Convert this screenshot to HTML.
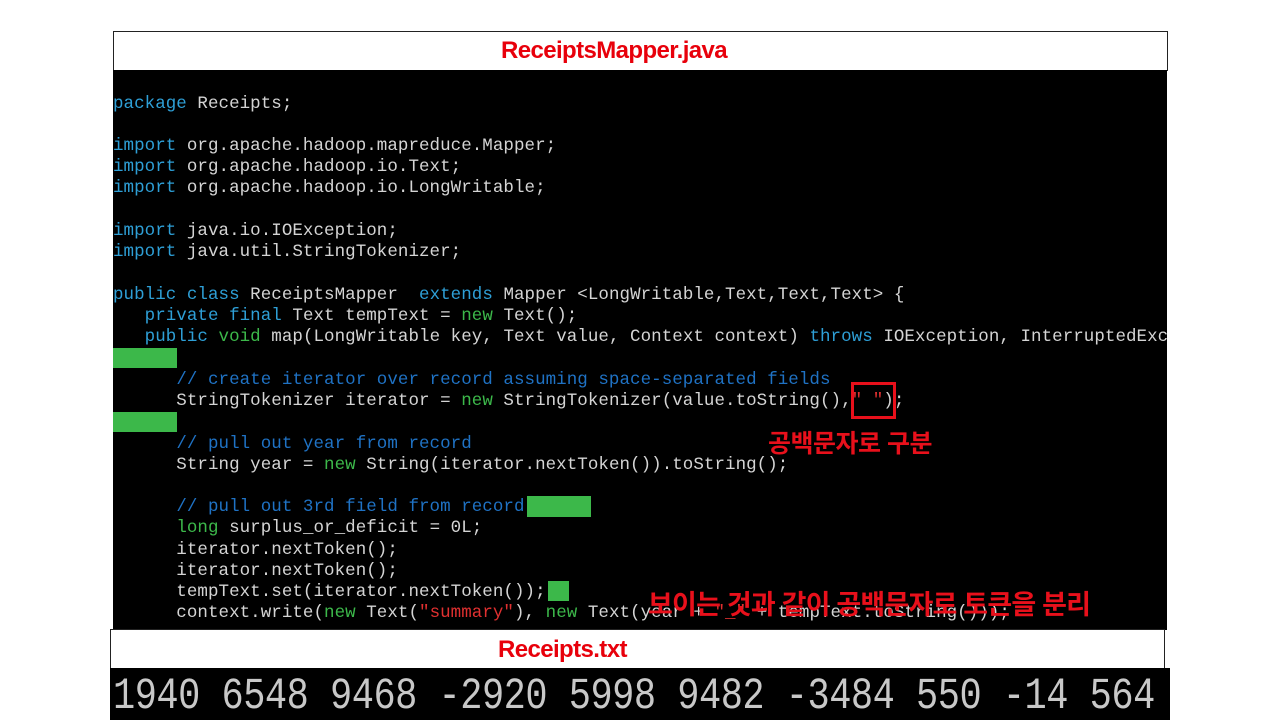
<!DOCTYPE html>
<html><head><meta charset="utf-8"><style>
html,body{margin:0;padding:0;background:#fff;width:1280px;height:720px;overflow:hidden;position:relative}
.code{position:absolute;left:113px;top:70px;width:1054px;height:560px;background:#000;overflow:hidden}
.l{position:absolute;left:0;white-space:pre;font-family:"Liberation Mono","DejaVu Sans Mono",monospace;font-size:17.5px;line-height:21px;color:#d4d4d4;letter-spacing:0.05px;margin-top:1px}
.k{color:#2e9fd6}.g{color:#3cb84a}.c{color:#1f72c4}.s{color:#e03030}
.gb{position:absolute;background:#3cb84a}
.box{position:absolute;background:#fff;border:1px solid #222;box-sizing:border-box;font-family:"Liberation Sans Narrow","Liberation Sans",sans-serif;font-weight:bold;color:#e8000b;font-size:24px;letter-spacing:-0.6px;white-space:nowrap}
.ann{position:absolute;font-family:"Liberation Sans","Noto Sans CJK KR",sans-serif;font-weight:bold;color:#e8101b;white-space:nowrap;letter-spacing:-0.5px}
.nums{position:absolute;left:110px;top:668px;width:1060px;height:52px;background:#000;overflow:hidden}
.nums span{position:absolute;left:3px;top:0;color:#c8c8c8;font-family:"Liberation Mono","DejaVu Sans Mono",monospace;font-size:37px;line-height:58px;white-space:pre;letter-spacing:-0.5px;transform:scaleY(1.2);transform-origin:0 50%}
</style></head><body>
<div class="box" style="left:113px;top:31px;width:1055px;height:40px;line-height:38px"><span style="position:absolute;left:387px">ReceiptsMapper.java</span></div>
<div class="code">
<div class="l" style="top:23px"><span class="k">package</span> Receipts;</div>
<div class="l" style="top:65px"><span class="k">import</span> org.apache.hadoop.mapreduce.Mapper;</div>
<div class="l" style="top:86px"><span class="k">import</span> org.apache.hadoop.io.Text;</div>
<div class="l" style="top:107px"><span class="k">import</span> org.apache.hadoop.io.LongWritable;</div>
<div class="l" style="top:150px"><span class="k">import</span> java.io.IOException;</div>
<div class="l" style="top:171px"><span class="k">import</span> java.util.StringTokenizer;</div>
<div class="l" style="top:214px"><span class="k">public class</span> ReceiptsMapper  <span class="k">extends</span> Mapper &lt;LongWritable,Text,Text,Text&gt; {</div>
<div class="l" style="top:235px">   <span class="k">private final</span> Text tempText = <span class="g">new</span> Text();</div>
<div class="l" style="top:256px">   <span class="k">public</span> <span class="g">void</span> map(LongWritable key, Text value, Context context) <span class="k">throws</span> IOException, InterruptedException</div>
<div class="gb" style="left:0;top:278px;width:64px;height:20px"></div>
<div class="l" style="top:299px">      <span class="c">// create iterator over record assuming space-separated fields</span></div>
<div class="l" style="top:320px">      StringTokenizer iterator = <span class="g">new</span> StringTokenizer(value.toString(),<span class="s">" "</span>);</div>
<div class="gb" style="left:0;top:342px;width:64px;height:20px"></div>
<div class="l" style="top:363px">      <span class="c">// pull out year from record</span></div>
<div class="l" style="top:384px">      String year = <span class="g">new</span> String(iterator.nextToken()).toString();</div>
<div class="l" style="top:426px">      <span class="c">// pull out 3rd field from record</span></div>
<div class="gb" style="left:414px;top:426px;width:64px;height:21px"></div>
<div class="l" style="top:447px">      <span class="g">long</span> surplus_or_deficit = 0L;</div>
<div class="l" style="top:469px">      iterator.nextToken();</div>
<div class="l" style="top:490px">      iterator.nextToken();</div>
<div class="l" style="top:511px">      tempText.set(iterator.nextToken());</div>
<div class="gb" style="left:435px;top:511px;width:21px;height:20px"></div>
<div class="l" style="top:532px">      context.write(<span class="g">new</span> Text(<span class="s">"summary"</span>), <span class="g">new</span> Text(year + <span class="s">"_"</span> + tempText.toString()));</div>
</div>
<div style="position:absolute;left:851px;top:382px;width:45px;height:37px;border:3px solid #e8101b;box-sizing:border-box"></div>
<div class="ann" style="left:768px;top:424px;font-size:25px">공백문자로 구분</div>
<div class="ann" style="left:648px;top:583px;font-size:27px;letter-spacing:-0.8px">보이는 것과 같이 공백문자로 토큰을 분리</div>
<div class="box" style="left:110px;top:629px;width:1055px;height:40px;line-height:40px"><span style="position:absolute;left:387px">Receipts.txt</span></div>
<div class="nums"><span>1940 6548 9468 -2920 5998 9482 -3484 550 -14 564</span></div>
</body></html>
